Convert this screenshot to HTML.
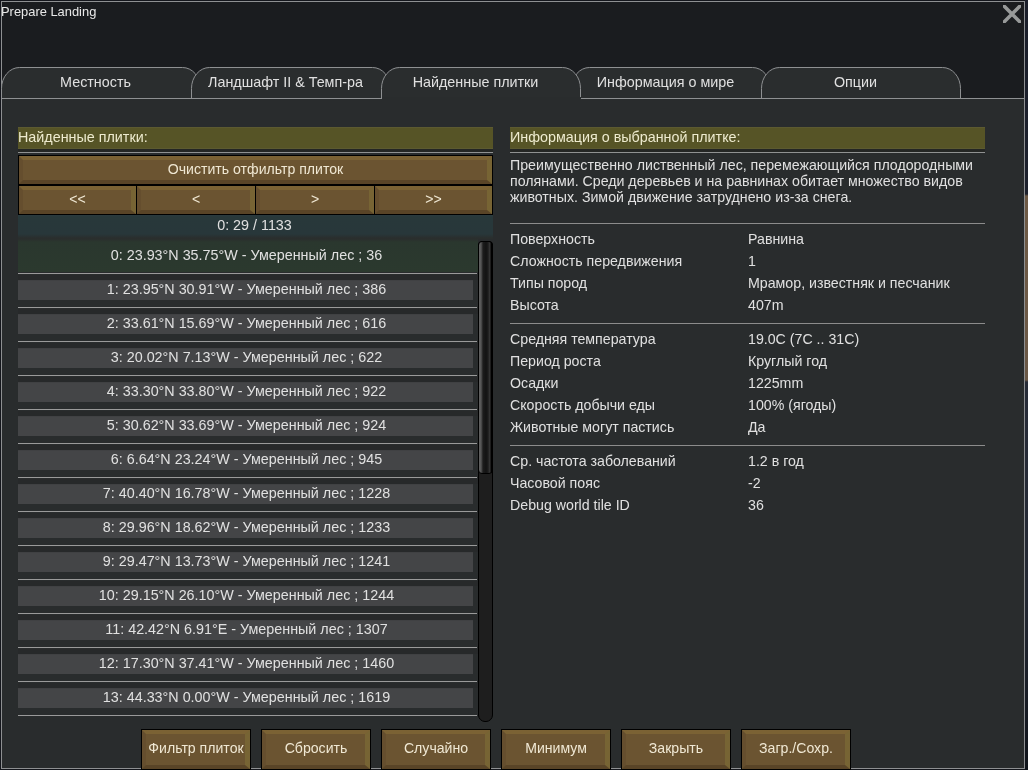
<!DOCTYPE html><html><head><meta charset="utf-8"><style>
*{margin:0;padding:0;box-sizing:border-box}
html,body{width:1028px;height:770px;overflow:hidden;background:#14161c}
body{position:relative;font-family:"Liberation Sans",sans-serif;font-size:14.33px;color:#e6e6e6}
.a{position:absolute}
.tx{position:absolute;white-space:nowrap;line-height:17px;will-change:transform}
.c{text-align:center}
.g{color:#e0e0e0}
.bt{position:absolute;background:#000}
.bt i{position:absolute;left:1px;top:1px;right:1px;bottom:1px;background:#6b5431;border-style:solid;border-width:4px 5px 4px 4px;border-color:#7b6234 #776434 #594427 #654e2e;filter:blur(.7px)}
.bt b{position:absolute;left:0;right:0;will-change:transform;font-size:14.1px;text-align:center;font-weight:normal;white-space:nowrap;line-height:17px;color:#f0e8d4}
</style></head><body>
<div class="a" style="left:1px;top:1px;width:1024px;height:768px;background:#1a1c1f;border:1px solid #8e9092"></div>
<div class="tx" style="left:1px;top:3px;font-size:12.9px;color:#e8e8e8">Prepare Landing</div>
<svg class="a" style="left:1003px;top:5px" width="18" height="18" viewBox="0 0 18 18"><path d="M-1 -1L19 19M19 -1L-1 19" stroke="#979999" stroke-width="3.6"/></svg>
<div class="a" style="left:1025px;top:0;width:3px;height:770px;background:linear-gradient(180deg,#1a1e2a 0,#1c202c 194px,#6e5a45 196px,#6a5846 380px,#262b37 382px,#232833 600px,#0f131a 770px)"></div>
<div class="a" style="left:1px;top:98px;width:1024px;height:671px;background:#292c2d;border:1px solid #8e9092"></div>
<svg class="a" style="left:0;top:0" width="1028" height="110" viewBox="0 0 1028 110"><path d="M1.5 98 L1.5 88.5 A18 21 0 0 1 19.5 67.5 L182.5 67.5 A18 21 0 0 1 200.5 88.5 L200.5 98.5 L200.5 98 L1.5 98 Z" fill="#2a2d2e"/><path d="M1.5 98.5 L1.5 88.5 A18 21 0 0 1 19.5 67.5 L182.5 67.5 A18 21 0 0 1 200.5 88.5 L200.5 98.5" fill="none" stroke="#8e9092" stroke-width="1"/><path d="M191.5 98 L191.5 88.5 A18 21 0 0 1 209.5 67.5 L372.5 67.5 A18 21 0 0 1 390.5 88.5 L390.5 98.5 L390.5 98 L191.5 98 Z" fill="#2a2d2e"/><path d="M191.5 98.5 L191.5 88.5 A18 21 0 0 1 209.5 67.5 L372.5 67.5 A18 21 0 0 1 390.5 88.5 L390.5 98.5" fill="none" stroke="#8e9092" stroke-width="1"/><path d="M571.5 98 L571.5 88.5 A18 21 0 0 1 589.5 67.5 L752.5 67.5 A18 21 0 0 1 770.5 88.5 L770.5 98.5 L770.5 98 L571.5 98 Z" fill="#2a2d2e"/><path d="M571.5 98.5 L571.5 88.5 A18 21 0 0 1 589.5 67.5 L752.5 67.5 A18 21 0 0 1 770.5 88.5 L770.5 98.5" fill="none" stroke="#8e9092" stroke-width="1"/><path d="M761.5 98 L761.5 88.5 A18 21 0 0 1 779.5 67.5 L942.5 67.5 A18 21 0 0 1 960.5 88.5 L960.5 98.5 L960.5 98 L761.5 98 Z" fill="#2a2d2e"/><path d="M761.5 98.5 L761.5 88.5 A18 21 0 0 1 779.5 67.5 L942.5 67.5 A18 21 0 0 1 960.5 88.5 L960.5 98.5" fill="none" stroke="#8e9092" stroke-width="1"/><path d="M381.5 98 L381.5 88.5 A18 21 0 0 1 399.5 67.5 L562.5 67.5 A18 21 0 0 1 580.5 88.5 L580.5 98.5 L580.5 98 L381.5 98 Z" fill="#2a2d2e"/><path d="M381.5 98.5 L381.5 88.5 A18 21 0 0 1 399.5 67.5 L562.5 67.5 A18 21 0 0 1 580.5 88.5 L580.5 98.5" fill="none" stroke="#8e9092" stroke-width="1"/><rect x="382" y="97" width="199" height="3" fill="#292c2d"/></svg>
<div class="tx c" style="left:1px;top:74px;width:189px;color:#e0e0e0">Местность</div>
<div class="tx c" style="left:191px;top:74px;width:189px;color:#e0e0e0">Ландшафт II &amp; Темп-ра</div>
<div class="tx c" style="left:381px;top:74px;width:189px;color:#e0e0e0">Найденные плитки</div>
<div class="tx c" style="left:571px;top:74px;width:189px;color:#e0e0e0">Информация о мире</div>
<div class="tx c" style="left:761px;top:74px;width:189px;color:#e0e0e0">Опции</div>
<div class="a" style="left:18px;top:149px;width:475px;height:3px;background:#242624"></div>
<div class="a" style="left:18px;top:127px;width:475px;height:22px;background:#565426;border-top:1px solid #5c5a30;border-bottom:1px solid #5c5a30"></div>
<div class="tx" style="left:18px;top:129px;color:#eeebcf">Найденные плитки:</div>
<div class="a" style="left:18px;top:152px;width:475px;height:1px;background:#909292"></div>
<div class="a" style="left:510px;top:149px;width:475px;height:3px;background:#242624"></div>
<div class="a" style="left:510px;top:127px;width:475px;height:22px;background:#565426;border-top:1px solid #5c5a30;border-bottom:1px solid #5c5a30"></div>
<div class="tx" style="left:510px;top:129px;color:#eeebcf">Информация о выбранной плитке:</div>
<div class="a" style="left:510px;top:152px;width:475px;height:1px;background:#909292"></div>
<div class="bt" style="left:18px;top:155px;width:475px;height:30px"><i></i><b style="top:6px">Очистить отфильтр плиток</b></div>
<div class="bt" style="left:18px;top:185px;width:119px;height:30px"><i></i><b style="top:6px">&lt;&lt;</b></div>
<div class="bt" style="left:136px;top:185px;width:120px;height:30px"><i></i><b style="top:6px">&lt;</b></div>
<div class="bt" style="left:255px;top:185px;width:120px;height:30px"><i></i><b style="top:6px">&gt;</b></div>
<div class="bt" style="left:374px;top:185px;width:119px;height:30px"><i></i><b style="top:6px">&gt;&gt;</b></div>
<div class="a" style="left:18px;top:215px;width:475px;height:24px;background:linear-gradient(180deg,#2a3a3f 0,#28383a 2px,#28373a 19px,#2a2e2d 23px)"></div>
<div class="tx c g" style="left:18px;top:217px;width:473px">0: 29 / 1133</div>
<div class="a" style="left:18px;top:239px;width:460px;height:33px;background:linear-gradient(180deg,#2a2e2d 0,#2a372e 3px,#2b392e 100%)"></div>
<div class="a" style="left:18px;top:273px;width:459px;height:1px;background:#9a9a9a"></div>
<div class="tx c g" style="left:18px;top:247px;width:457px">0: 23.93°N 35.75°W - Умеренный лес ; 36</div>
<div class="a" style="left:18px;top:275px;width:460px;height:5px;background:#27292a"></div>
<div class="a" style="left:18px;top:280px;width:455px;height:20px;background:#444547;border-top:1px solid #404143"></div>
<div class="a" style="left:18px;top:307px;width:459px;height:1px;background:#9a9a9a"></div>
<div class="tx c g" style="left:18px;top:281px;width:457px">1: 23.95°N 30.91°W - Умеренный лес ; 386</div>
<div class="a" style="left:18px;top:309px;width:460px;height:5px;background:#27292a"></div>
<div class="a" style="left:18px;top:314px;width:455px;height:20px;background:#444547;border-top:1px solid #404143"></div>
<div class="a" style="left:18px;top:341px;width:459px;height:1px;background:#9a9a9a"></div>
<div class="tx c g" style="left:18px;top:315px;width:457px">2: 33.61°N 15.69°W - Умеренный лес ; 616</div>
<div class="a" style="left:18px;top:343px;width:460px;height:5px;background:#27292a"></div>
<div class="a" style="left:18px;top:348px;width:455px;height:20px;background:#444547;border-top:1px solid #404143"></div>
<div class="a" style="left:18px;top:375px;width:459px;height:1px;background:#9a9a9a"></div>
<div class="tx c g" style="left:18px;top:349px;width:457px">3: 20.02°N 7.13°W - Умеренный лес ; 622</div>
<div class="a" style="left:18px;top:377px;width:460px;height:5px;background:#27292a"></div>
<div class="a" style="left:18px;top:382px;width:455px;height:20px;background:#444547;border-top:1px solid #404143"></div>
<div class="a" style="left:18px;top:409px;width:459px;height:1px;background:#9a9a9a"></div>
<div class="tx c g" style="left:18px;top:383px;width:457px">4: 33.30°N 33.80°W - Умеренный лес ; 922</div>
<div class="a" style="left:18px;top:411px;width:460px;height:5px;background:#27292a"></div>
<div class="a" style="left:18px;top:416px;width:455px;height:20px;background:#444547;border-top:1px solid #404143"></div>
<div class="a" style="left:18px;top:443px;width:459px;height:1px;background:#9a9a9a"></div>
<div class="tx c g" style="left:18px;top:417px;width:457px">5: 30.62°N 33.69°W - Умеренный лес ; 924</div>
<div class="a" style="left:18px;top:445px;width:460px;height:5px;background:#27292a"></div>
<div class="a" style="left:18px;top:450px;width:455px;height:20px;background:#444547;border-top:1px solid #404143"></div>
<div class="a" style="left:18px;top:477px;width:459px;height:1px;background:#9a9a9a"></div>
<div class="tx c g" style="left:18px;top:451px;width:457px">6: 6.64°N 23.24°W - Умеренный лес ; 945</div>
<div class="a" style="left:18px;top:479px;width:460px;height:5px;background:#27292a"></div>
<div class="a" style="left:18px;top:484px;width:455px;height:20px;background:#444547;border-top:1px solid #404143"></div>
<div class="a" style="left:18px;top:511px;width:459px;height:1px;background:#9a9a9a"></div>
<div class="tx c g" style="left:18px;top:485px;width:457px">7: 40.40°N 16.78°W - Умеренный лес ; 1228</div>
<div class="a" style="left:18px;top:513px;width:460px;height:5px;background:#27292a"></div>
<div class="a" style="left:18px;top:518px;width:455px;height:20px;background:#444547;border-top:1px solid #404143"></div>
<div class="a" style="left:18px;top:545px;width:459px;height:1px;background:#9a9a9a"></div>
<div class="tx c g" style="left:18px;top:519px;width:457px">8: 29.96°N 18.62°W - Умеренный лес ; 1233</div>
<div class="a" style="left:18px;top:547px;width:460px;height:5px;background:#27292a"></div>
<div class="a" style="left:18px;top:552px;width:455px;height:20px;background:#444547;border-top:1px solid #404143"></div>
<div class="a" style="left:18px;top:579px;width:459px;height:1px;background:#9a9a9a"></div>
<div class="tx c g" style="left:18px;top:553px;width:457px">9: 29.47°N 13.73°W - Умеренный лес ; 1241</div>
<div class="a" style="left:18px;top:581px;width:460px;height:5px;background:#27292a"></div>
<div class="a" style="left:18px;top:586px;width:455px;height:20px;background:#444547;border-top:1px solid #404143"></div>
<div class="a" style="left:18px;top:613px;width:459px;height:1px;background:#9a9a9a"></div>
<div class="tx c g" style="left:18px;top:587px;width:457px">10: 29.15°N 26.10°W - Умеренный лес ; 1244</div>
<div class="a" style="left:18px;top:615px;width:460px;height:5px;background:#27292a"></div>
<div class="a" style="left:18px;top:620px;width:455px;height:20px;background:#444547;border-top:1px solid #404143"></div>
<div class="a" style="left:18px;top:647px;width:459px;height:1px;background:#9a9a9a"></div>
<div class="tx c g" style="left:18px;top:621px;width:457px">11: 42.42°N 6.91°E - Умеренный лес ; 1307</div>
<div class="a" style="left:18px;top:649px;width:460px;height:5px;background:#27292a"></div>
<div class="a" style="left:18px;top:654px;width:455px;height:20px;background:#444547;border-top:1px solid #404143"></div>
<div class="a" style="left:18px;top:681px;width:459px;height:1px;background:#9a9a9a"></div>
<div class="tx c g" style="left:18px;top:655px;width:457px">12: 17.30°N 37.41°W - Умеренный лес ; 1460</div>
<div class="a" style="left:18px;top:683px;width:460px;height:5px;background:#27292a"></div>
<div class="a" style="left:18px;top:688px;width:455px;height:20px;background:#444547;border-top:1px solid #404143"></div>
<div class="a" style="left:18px;top:715px;width:459px;height:1px;background:#9a9a9a"></div>
<div class="tx c g" style="left:18px;top:689px;width:457px">13: 44.33°N 0.00°W - Умеренный лес ; 1619</div>
<div class="a" style="left:478px;top:241px;width:15px;height:481px;background:#1e1e1e;border:1px solid #000;border-radius:4px 4px 7px 7px"></div>
<div class="a" style="left:478px;top:241px;width:15px;height:233px;border-radius:4px;border:1px solid #000;background:linear-gradient(90deg,#606060 0,#565656 2px,#1c1c1c 4px,#131313 7px,#1c1c1c 9px,#3a3a3a 11px,#000 12px)"></div>
<div class="tx g" style="left:510px;top:157px;font-size:14.2px">Преимущественно лиственный лес, перемежающийся плодородными</div>
<div class="tx g" style="left:510px;top:173px;font-size:14.2px">полянами. Среди деревьев и на равнинах обитает множество видов</div>
<div class="tx g" style="left:510px;top:189px;font-size:14.2px">животных. Зимой движение затруднено из-за снега.</div>
<div class="a" style="left:510px;top:223px;width:475px;height:1px;background:#8c8c8c"></div>
<div class="a" style="left:510px;top:323px;width:475px;height:1px;background:#8c8c8c"></div>
<div class="a" style="left:510px;top:445px;width:475px;height:1px;background:#8c8c8c"></div>
<div class="tx g" style="left:510px;top:231px;font-size:14.2px">Поверхность</div>
<div class="tx g" style="left:748px;top:231px;font-size:14.2px">Равнина</div>
<div class="tx g" style="left:510px;top:253px;font-size:14.2px">Сложность передвижения</div>
<div class="tx g" style="left:748px;top:253px;font-size:14.2px">1</div>
<div class="tx g" style="left:510px;top:275px;font-size:14.2px">Типы пород</div>
<div class="tx g" style="left:748px;top:275px;font-size:14.2px">Мрамор, известняк и песчаник</div>
<div class="tx g" style="left:510px;top:297px;font-size:14.2px">Высота</div>
<div class="tx g" style="left:748px;top:297px;font-size:14.2px">407m</div>
<div class="tx g" style="left:510px;top:331px;font-size:14.2px">Средняя температура</div>
<div class="tx g" style="left:748px;top:331px;font-size:14.2px">19.0C (7C .. 31C)</div>
<div class="tx g" style="left:510px;top:353px;font-size:14.2px">Период роста</div>
<div class="tx g" style="left:748px;top:353px;font-size:14.2px">Круглый год</div>
<div class="tx g" style="left:510px;top:375px;font-size:14.2px">Осадки</div>
<div class="tx g" style="left:748px;top:375px;font-size:14.2px">1225mm</div>
<div class="tx g" style="left:510px;top:397px;font-size:14.2px">Скорость добычи еды</div>
<div class="tx g" style="left:748px;top:397px;font-size:14.2px">100% (ягоды)</div>
<div class="tx g" style="left:510px;top:419px;font-size:14.2px">Животные могут пастись</div>
<div class="tx g" style="left:748px;top:419px;font-size:14.2px">Да</div>
<div class="tx g" style="left:510px;top:453px;font-size:14.2px">Ср. частота заболеваний</div>
<div class="tx g" style="left:748px;top:453px;font-size:14.2px">1.2 в год</div>
<div class="tx g" style="left:510px;top:475px;font-size:14.2px">Часовой пояс</div>
<div class="tx g" style="left:748px;top:475px;font-size:14.2px">-2</div>
<div class="tx g" style="left:510px;top:497px;font-size:14.2px">Debug world tile ID</div>
<div class="tx g" style="left:748px;top:497px;font-size:14.2px">36</div>
<div class="bt" style="left:141px;top:729px;width:110px;height:41px"><i></i><b style="top:11px">Фильтр плиток</b></div>
<div class="bt" style="left:261px;top:729px;width:110px;height:41px"><i></i><b style="top:11px">Сбросить</b></div>
<div class="bt" style="left:381px;top:729px;width:110px;height:41px"><i></i><b style="top:11px">Случайно</b></div>
<div class="bt" style="left:501px;top:729px;width:110px;height:41px"><i></i><b style="top:11px">Минимум</b></div>
<div class="bt" style="left:621px;top:729px;width:110px;height:41px"><i></i><b style="top:11px">Закрыть</b></div>
<div class="bt" style="left:741px;top:729px;width:110px;height:41px"><i></i><b style="top:11px">Загр./Сохр.</b></div>
</body></html>
